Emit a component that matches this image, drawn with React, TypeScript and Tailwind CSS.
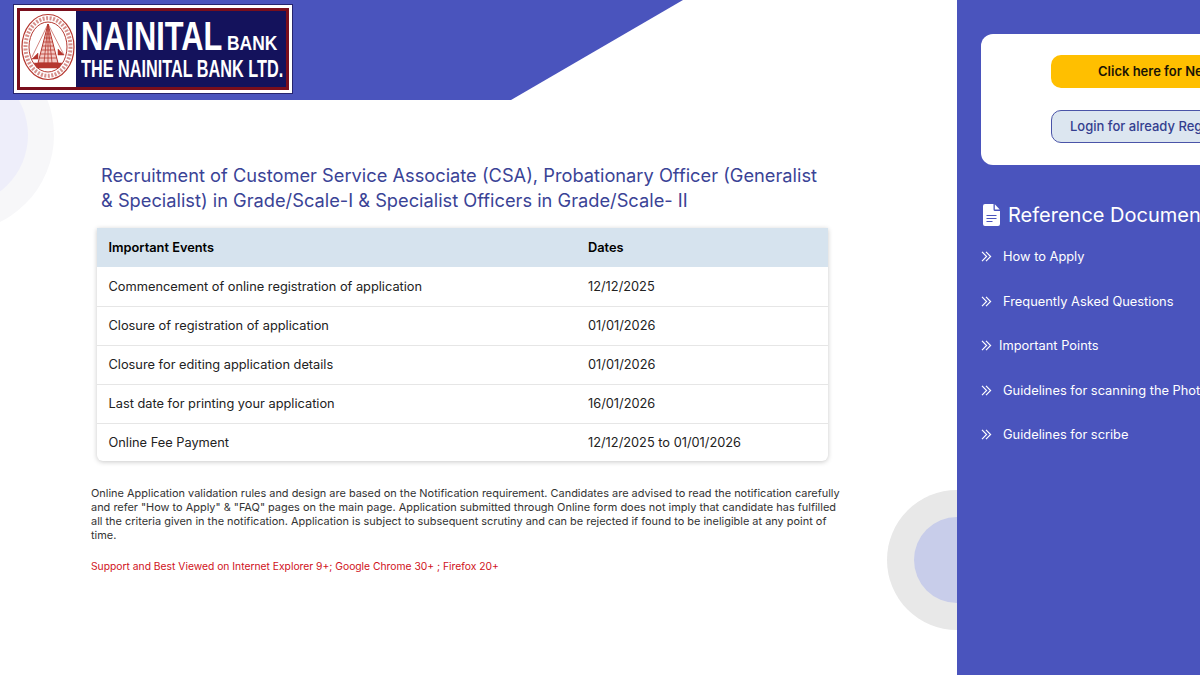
const events = [
	{ name: "Commencement of online registration of application", date: "12/12/2025" },
	{ name: "Closure of registration of application", date: "01/01/2026" },
	{ name: "Closure for editing application details", date: "01/01/2026" },
	{ name: "Last date for printing your application", date: "16/01/2026" },
	{ name: "Online Fee Payment", date: "12/12/2025 to 01/01/2026" },
];

const docs = [
	{ label: "How to Apply", gap: "gap-[11px]", mb: "mb-[27px]" },
	{ label: "Frequently Asked Questions", gap: "gap-[11px]", mb: "mb-[27px]" },
	{ label: "Important Points", gap: "gap-[7px]", mb: "mb-[27px]" },
	{ label: "Guidelines for scanning the Photo and Signature", gap: "gap-[11px]", mb: "mb-[27px]" },
	{ label: "Guidelines for scribe", gap: "gap-[11px]", mb: "" },
];

function Chevrons() {
	return (
		<svg width="11" height="11" viewBox="0 0 11 11" fill="none" stroke="white" strokeWidth="1.2" className="shrink-0">
			<path d="M1 .8 5.600 5.500 1 10.200" />
			<path d="M5 .8 9.600 5.500 5 10.200" />
		</svg>
	);
}

function Seal() {
	return (
		<svg width="54" height="72" viewBox="0 0 54 72" fill="none" stroke="#b5372f">
			<ellipse cx="27" cy="34" rx="26" ry="32.500" strokeWidth="1.200" />
			<ellipse cx="27" cy="34" rx="19" ry="25" strokeWidth="1" />
			<ellipse cx="27" cy="34" rx="22.500" ry="28.800" strokeWidth="4" strokeDasharray="2 1.500" strokeOpacity="0.55" />
			<path d="M27 11 17 50h20Z" fill="#f3c9c4" strokeWidth="1" />
			<path d="M27 11v39M24.500 21h5M23.500 25h7M22.500 29h9M21.500 33h11M20.500 37h13M19.500 41h15M18.500 45h17M23 50 27 11M31 50 27 11" strokeWidth="0.8" />
			<path d="M27 11 11 44M27 11 43 42" strokeWidth="0.6" />
			<path d="M13 50h28l-3 5H16Z" fill="#b5372f" strokeWidth="0.5" />
			<path d="M37 36l6 6h-6ZM17 40l-6 6h6Z" fill="#b5372f" strokeWidth="0.5" />
		</svg>
	);
}

function Logo() {
	return (
		<div className="w-[280px] h-[90px] bg-white border border-[#26246e] p-[3px]">
			<div className="h-full bg-[#14125c] border-[3px] border-[#7a0e1c] flex">
				<div className="w-[56px] bg-white shrink-0 flex items-center justify-center">
					<Seal />
				</div>
				<div className="flex-1 pl-[5px] pt-[6px] text-white font-['Liberation_Sans',sans-serif] font-bold whitespace-nowrap">
					<div className="flex items-baseline h-[38px] leading-[38px]">
						<span className="text-[40px] inline-block origin-left scale-x-[0.77] w-[141px]">NAINITAL</span>
						<span className="text-[21px] inline-block origin-left scale-x-[0.83] ml-[5px]">BANK</span>
					</div>
					<div className="text-[24px] leading-[26px] mt-[1px] origin-left scale-x-[0.677] w-[202px]">THE NAINITAL BANK LTD.</div>
				</div>
			</div>
		</div>
	);
}

function Sidebar() {
	return (
		<aside className="w-[243px] h-full bg-[#4a54bd] shrink-0 pl-[24px] pt-[34px] overflow-hidden relative z-10">
			<div className="w-[300px] h-[131px] bg-white rounded-[12px] pl-[70px] pt-[21px]">
				<div className="w-[280px] h-[33px] rounded-[10px] bg-[#ffbf00] text-[#1a1405] text-[13px] font-semibold flex items-center justify-start pl-[47px] whitespace-nowrap">
					Click here for New Registration
				</div>
				<div className="w-[280px] h-[33px] mt-[22px] rounded-[10px] bg-[#dce6f0] border border-[#4a54a8] text-[#343e8f] text-[13px] font-medium flex items-center justify-start pl-[18px] whitespace-nowrap">
					Login for already Registered Candidates
				</div>
			</div>
			<div className="flex items-center gap-[8px] mt-[38px] ml-[2px] text-white whitespace-nowrap">
				<svg width="17" height="22" viewBox="0 0 17 22" className="shrink-0">
					<path fill="white" d="M2 0h8.500v5.500a1.500 1.500 0 0 0 1.500 1.500h5v13a2 2 0 0 1-2 2H2a2 2 0 0 1-2-2V2a2 2 0 0 1 2-2Z" />
					<path fill="white" d="M11.800.3 16.700 5.500h-4.900Z" />
					<path stroke="#4a54bd" strokeWidth="1.200" d="M3.500 11.500h10M3.500 14.500h10M3.500 17.500h6" />
				</svg>
				<span className="text-[20px] leading-[24px]">Reference Documents</span>
			</div>
			<ul className="mt-[21px]">
				{docs.map((doc) => (
					<li key={doc.label} className={`flex items-center h-[17.500px] ${doc.gap} ${doc.mb} text-[12.850px] text-white whitespace-nowrap`}>
						<Chevrons />
						<span>{doc.label}</span>
					</li>
				))}
			</ul>
		</aside>
	);
}

function EventsTable() {
	return (
		<div className="ml-[97px] w-[731px] rounded-b-[6px] bg-white shadow-[0_1px_5px_rgba(0,0,0,0.22)] overflow-hidden">
			<div className="h-[39px] bg-[#d6e3ee] flex items-center text-[12.800px] font-semibold text-black">
				<div className="w-[491px] pl-[11.500px]">Important Events</div>
				<div>Dates</div>
			</div>
			{events.map((event, index) => (
				<div key={event.name} className={`flex items-center text-[12.800px] text-[#222] ${index > 0 ? "border-t border-[#e6e6e6]" : ""} ${index === events.length - 1 ? "h-[38px]" : "h-[39px]"}`}>
					<div className="w-[491px] pl-[11.500px]">{event.name}</div>
					<div>{event.date}</div>
				</div>
			))}
		</div>
	);
}

export default function App() {
	return (
		<div className="w-[1200px] h-[675px] flex overflow-hidden bg-white font-['Inter',sans-serif]">
			<main className="relative w-[957px] h-full shrink-0">
				<div className="absolute left-[-140px] top-[38px] w-[194px] h-[194px] rounded-full bg-[#f7f7f9] flex items-center justify-center">
					<div className="w-[142px] h-[142px] rounded-full bg-[#eeeefa]" />
				</div>
				<div className="absolute left-[887px] top-[490px] w-[140px] h-[140px] rounded-full bg-[#e8e8e8] flex items-center justify-center">
					<div className="w-[86px] h-[86px] rounded-full bg-[#c8cdea]" />
				</div>

				<div className="absolute left-0 top-0 w-[683px] h-[100px] bg-[#4a54bd] [clip-path:polygon(0_0,100%_0,511px_100%,0_100%)]" />

				<div className="relative">
					<div className="pl-[13px] pt-[4px] h-[163px]">
						<Logo />
					</div>
					<h1 className="ml-[101px] w-[725px] text-[18.250px] leading-[25px] text-[#3a4396] mb-[15px]">
						Recruitment of Customer Service Associate (CSA), Probationary Officer (Generalist &amp; Specialist) in Grade/Scale-I &amp; Specialist Officers in Grade/Scale- II
					</h1>
					<EventsTable />
					<p className="ml-[91px] w-[755px] mt-[25px] text-[10.950px] leading-[14px] text-[#333]">
						Online Application validation rules and design are based on the Notification requirement. Candidates are advised to read the notification carefully and refer "How to Apply" &amp; "FAQ" pages on the main page. Application submitted through Online form does not imply that candidate has fulfilled all the criteria given in the notification. Application is subject to subsequent scrutiny and can be rejected if found to be ineligible at any point of time.
					</p>
					<p className="ml-[91px] mt-[17px] text-[10.300px] leading-[14px] text-[#d0121b]">
						Support and Best Viewed on Internet Explorer 9+; Google Chrome 30+ ; Firefox 20+
					</p>
				</div>
			</main>
			<Sidebar />
		</div>
	);
}
